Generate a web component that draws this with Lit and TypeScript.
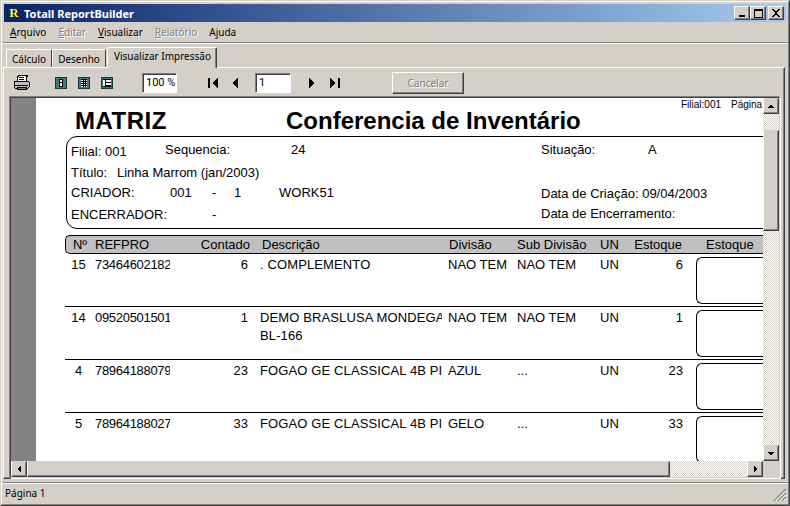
import { LitElement, html, css, svg } from "lit";
import { customElement } from "lit/decorators.js";

const rows = [
  { n: "15", ref: "73464602182", qty: "6", desc: [". COMPLEMENTO"], div: "NAO TEM", sub: "NAO TEM", un: "UN", est: "6" },
  { n: "14", ref: "09520501501", qty: "1", desc: ["DEMO BRASLUSA MONDEGA", "BL-166"], div: "NAO TEM", sub: "NAO TEM", un: "UN", est: "1" },
  { n: "4", ref: "78964188079", qty: "23", desc: ["FOGAO GE CLASSICAL 4B PI"], div: "AZUL", sub: "...", un: "UN", est: "23" },
  { n: "5", ref: "78964188027", qty: "33", desc: ["FOGAO GE CLASSICAL 4B PI"], div: "GELO", sub: "...", un: "UN", est: "33" },
];

const arrow = (d: string, w = 12, h = 12) =>
  html`<svg width=${w} height=${h} viewBox="0 0 ${w} ${h}" fill="#000" shape-rendering="crispEdges"><path d=${d}></path></svg>`;

const pageIcon = (inner: unknown) => html`<svg class="pg" width="12" height="12" viewBox="0 0 12 12" shape-rendering="crispEdges">
  <rect width="12" height="12" fill="#46777a"></rect>
  <path d="M0 0h12v1H0zM0 11h12v1H0zM0 0h1v12H0zM11 0h1v12h-1z" fill="#123a3a"></path>
  ${inner}
</svg>`;

@customElement("app-root")
export class AppRoot extends LitElement {
  static styles = css`
    :host { display: block; width: 790px; height: 506px; overflow: hidden; background: #d4d0c8; font-family: "Noto Sans", "Liberation Sans", sans-serif; font-size: 10px; color: #000; }
    * { box-sizing: border-box; }
    .outer { height: 506px; border: 1px solid; border-color: #d4d0c8 #404040 #404040 #d4d0c8; }
    .win { height: 100%; border: 1px solid; border-color: #fff #808080 #808080 #fff; padding: 2px; display: flex; flex-direction: column; }
    .title { height: 18px; flex: none; display: flex; align-items: center; padding: 0 2px 0 4px; background: linear-gradient(90deg, #0a246a, #a6caf0); color: #fff; font-weight: 700; gap: 4px; }
    .title .name { flex: 1; font-size: 11px; white-space: nowrap; }
    .logo { width: 12px; height: 12px; color: #ffff30; font: 700 13px/12px "Liberation Serif", serif; text-shadow: 1px 0 0 #000; text-align: center; }
    .wbtns { display: flex; }
    .wbtn { width: 16px; height: 14px; background: #d4d0c8; display: flex; align-items: center; justify-content: center; border: 1px solid; border-color: #fff #404040 #404040 #fff; box-shadow: inset -1px -1px 0 #808080; }
    .wbtn.close { margin-left: 2px; }
    .menu { height: 20px; flex: none; display: flex; align-items: center; gap: 12px; padding-left: 6px; white-space: nowrap; }
    .menu u { text-decoration: underline; }
    .off { color: #808080; text-shadow: 1px 1px 0 #fff; }
    .sep { height: 2px; flex: none; background: #808080; border-bottom: 1px solid #fff; margin: 0 -1px; }
    .tabs { height: 23px; flex: none; display: flex; align-items: flex-end; padding-left: 2px; position: relative; z-index: 1; }
    .tab { height: 18px; padding: 0 5px; display: flex; align-items: center; border: 1px solid; border-color: #fff #404040 transparent #fff; border-bottom: 0; border-radius: 2px 2px 0 0; white-space: nowrap; }
    .tab.active { height: 21px; margin: 0 0 -1px 1px; background: #d4d0c8; padding: 0 5px 4px 6px; box-shadow: inset -1px 0 0 #808080; }
    .panel { flex: 1; min-height: 0; margin: 0 1px 0 -1px; border: 1px solid; border-color: #fff #404040 #404040 #fff; box-shadow: inset -1px -1px 0 #808080; display: flex; flex-direction: column; }
    .toolbar { height: 29px; flex: none; display: flex; align-items: center; }
    .printer { margin-left: 9px; margin-right: 25px; }
    .pg { margin-right: 11px; }
    .field { height: 20px; background: #fff; border: 1px solid; border-color: #808080 #fff #fff #808080; box-shadow: inset 1px 1px 0 #404040; display: flex; align-items: center; padding-left: 3px; white-space: nowrap; font-size: 11px; font-family: Roboto, sans-serif; }
    .zoom { width: 35px; margin-left: 18px; margin-right: 31px; }
    .page-no { width: 36px; margin: 0 18px 0 17px; }
    .nav { display: block; line-height: 0; }
    .nav-first { margin-right: 12px; }
    .nav-next { margin-right: 15px; }
    .cancel { width: 72px; height: 22px; margin-left: 52px; display: flex; align-items: center; justify-content: center; background: #d4d0c8; border: 1px solid; border-color: #fff #404040 #404040 #fff; box-shadow: inset -1px -1px 0 #808080; }
    .viewer { width: 770px; height: 381px; margin-left: 6px; display: grid; grid-template-columns: 752px 16px; grid-template-rows: 363px 16px; border: 1px solid; border-color: #404040 #d4d0c8 #d4d0c8 #404040; box-shadow: -1px -1px 0 #808080, 1px 1px 0 #fff; font-family: "Liberation Sans", Arial, sans-serif; font-size: 13px; }
    .stage { overflow: hidden; display: flex; background: #848284; padding-left: 25px; }
    .sheet { width: 900px; flex: none; background: #fff; padding-left: 29px; white-space: nowrap; line-height: 18px; }
    .head { height: 38px; display: grid; grid-template-columns: 221px 395px auto; font-weight: 700; font-size: 24px; line-height: 28px; align-items: end; padding-bottom: 1px; }
    .head .matriz { padding-left: 10px; letter-spacing: 0.5px; }
    .head .small { align-self: start; font-weight: 400; font-size: 10px; line-height: 14px; }
    .small b { font-weight: 400; margin-left: 10px; }
    .info { height: 93px; margin-left: 1px; border: 1px solid #000; border-radius: 11px 0 0 11px; padding: 4px 0 0 4px; display: grid; grid-template-columns: 46px 48px 5px 42px 22px 45px 12px 250px 107px 1fr; grid-template-rows: 23px 20px 22px 22px; }
    .i-filial { grid-column: 1 / 3; padding-top: 2px; }
    .i-seq { grid-column: 3 / 7; }
    .i-val { grid-column: 8; }
    .i-sit { grid-column: 9; }
    .i-a { grid-column: 10; }
    .i-tit { grid-column: 1; }
    .i-lin { grid-column: 2 / 8; }
    .i-lab { grid-column: 1 / 4; }
    .i-c1 { grid-column: 4; }
    .i-c2 { grid-column: 5; }
    .i-c3 { grid-column: 6; }
    .i-c4 { grid-column: 7 / 9; }
    .i-dc { grid-column: 9 / 11; padding-top: 1px; }
    .i-de { grid-column: 9 / 11; margin-top: -1px; }
    .table-head, .row { display: grid; }
    .table-head { grid-template-columns: 29px 75px 80px 199px 68px 83px 30px 52px 100px; height: 19px; margin-top: 6px; background: #c0bfc2; border: solid #000; border-width: 1px 0 1px 1px; border-radius: 5px 0 0 5px; line-height: 18px; align-items: center; }
    .row { grid-template-columns: 30px 75px 78px 200px 69px 83px 30px 53px 100px; height: 53px; border-bottom: 1px solid #000; }
    .row > span { padding-top: 2px; overflow: hidden; }
    .c-n { padding: 0 9px 0 6px; text-align: center; }
    .table-head .c-n { padding: 0 7px 0 6px; }
    .c-ref { letter-spacing: -0.3px; }
    .c-num { text-align: right; }
    .row > .c-desc { margin: 0 6px 0 12px; letter-spacing: 0.12px; }
    .head-desc { margin-left: 12px; }
    .head-box { padding-left: 24px; }
    .box { margin: 3px 0 2px 13px; border: 1px solid #000; border-radius: 6px 0 0 6px; border-right: 0; }
    .vbar { display: flex; flex-direction: column; }
    .hbar { display: flex; }
    .track { flex: 1; background: repeating-conic-gradient(#d4d0c8 0 25%, #fff 0 50%) 0 0 / 2px 2px; }
    .vbar .track { padding-top: 16px; }
    .vbar .thumb { height: 101px; }
    .hbar .thumb { width: 643px; }
    .thumb, .sb { background: #d4d0c8; border: 1px solid; border-color: #d4d0c8 #404040 #404040 #fff; box-shadow: inset -1px -1px 0 #808080; }
    .sb { width: 16px; height: 16px; flex: none; display: flex; align-items: center; justify-content: center; }
    .corner { background: #d4d0c8; }
    .status { height: 20px; margin: 3px -1px 0 -1px; flex: none; border-top: 1px solid #808080; box-shadow: inset 0 1px 0 #fff; display: flex; align-items: center; justify-content: space-between; padding: 1px 0 0 2px; }
    .status svg { align-self: flex-end; }
  `;

  render() {
    return html`<div class="outer"><div class="win">
      <div class="title">
        <div class="logo">R</div>
        <div class="name">Totall ReportBuilder</div>
        <div class="wbtns">
          <div class="wbtn">${arrow("M1 6h6v2H1z", 9, 9)}</div>
          <div class="wbtn">${arrow("M0 0h9v2H0zM0 0h1v9H0zM8 0h1v9H8zM0 8h9v1H0z", 9, 9)}</div>
          <div class="wbtn close">${arrow("M0 0h2l1.5 2h1L6 0h2L5 4l3 4H6L4.5 6h-1L2 8H0l3-4z", 9, 9)}</div>
        </div>
      </div>
      <div class="menu">
        <span><u>A</u>rquivo</span>
        <span class="off"><u>E</u>ditar</span>
        <span><u>V</u>isualizar</span>
        <span class="off"><u>R</u>elatório</span>
        <span>A<u>j</u>uda</span>
      </div>
      <div class="sep"></div>
      <div class="tabs">
        <div class="tab">Cálculo</div>
        <div class="tab">Desenho</div>
        <div class="tab active">Visualizar Impressão</div>
      </div>
      <div class="panel">
        <div class="toolbar">
          <svg class="printer" width="17" height="17" viewBox="0 0 17 17" shape-rendering="crispEdges">
            <path d="M5 1h9v1h-1v5H4V2h1z" fill="#fff" stroke="#000" stroke-width="1"></path>
            <path d="M6 3h5M6 5h5" stroke="#000"></path>
            <path d="M2 7h13l1 1v5l-1 1H2l-1-1V8z" fill="#c0c0c0" stroke="#000"></path>
            <path d="M2 11h13" stroke="#000"></path>
            <path d="M4 13h9v2H4z" fill="#808080" stroke="#000"></path>
          </svg>
          ${pageIcon(svg`<path d="M4 2h4v8H4z" fill="#000"></path><path d="M5 3h2v2H5zM5 6h2v3H5z" fill="#fff"></path>`)}
          ${pageIcon(svg`<path d="M3 2h6v8H3z" fill="#fff"></path><path d="M3 2h6v1H3zM3 4h6v1H3zM3 6h6v1H3zM3 8h6v1H3zM5 2h1v8H5zM7 2h1v8H7z" fill="#000"></path>`)}
          ${pageIcon(svg`<path d="M2 2h8v8H2z" fill="#fff"></path><path d="M2 2h8v1H2zM5 5h5v1H5zM5 8h5v1H5zM4 3h1v7H4zM2 9h8v1H2z" fill="#000"></path>`)}
          <div class="field zoom">100 %</div>
          <span class="nav nav-first">${arrow("M0 1h2v10H0zM10 1v10L4 6z")}</span>
          <span class="nav">${arrow("M6 1v10L0 6z", 6, 12)}</span>
          <div class="field page-no">1</div>
          <span class="nav nav-next">${arrow("M0 1v10l6-5z", 6, 12)}</span>
          <span class="nav">${arrow("M0 1v10l6-5zM8 1h2v10H8z", 10, 12)}</span>
          <div class="cancel off">Cancelar</div>
        </div>
        <div class="viewer">
          <div class="stage">
            <div class="sheet">
              <div class="head">
                <span class="matriz">MATRIZ</span>
                <span>Conferencia de Inventário</span>
                <span class="small">Filial:001<b>Página 1</b></span>
              </div>
              <div class="info">
                <span class="i-filial">Filial: 001</span><span class="i-seq">Sequencia:</span><span class="i-val">24</span><span class="i-sit">Situação:</span><span class="i-a">A</span>
                <span class="i-tit">Título:</span><span class="i-lin">Linha Marrom (jan/2003)</span>
                <span class="i-lab">CRIADOR:</span><span class="i-c1">001</span><span class="i-c2">-</span><span class="i-c3">1</span><span class="i-c4">WORK51</span><span class="i-dc">Data de Criação: 09/04/2003</span>
                <span class="i-lab">ENCERRADOR:</span><span class="i-c2">-</span><span class="i-de">Data de Encerramento:</span>
              </div>
              <div class="table-head">
                <span class="c-n">Nº</span><span>REFPRO</span><span class="c-num">Contado</span><span class="head-desc">Descrição</span><span>Divisão</span><span>Sub Divisão</span><span>UN</span><span class="c-num">Estoque</span><span class="head-box">Estoque</span>
              </div>
              ${rows.map(
                (r) => html`<div class="row">
                  <span class="c-n">${r.n}</span><span class="c-ref">${r.ref}</span><span class="c-num">${r.qty}</span>
                  <span class="c-desc">${r.desc.map((l) => html`${l}<br />`)}</span>
                  <span>${r.div}</span><span>${r.sub}</span><span>${r.un}</span><span class="c-num">${r.est}</span>
                  <div class="box"></div>
                </div>`
              )}
            </div>
          </div>
          <div class="vbar">
            <div class="sb">${arrow("M4 2h1v1h1v1h1v1H1V4h1V3h1V2h1z", 8, 7)}</div>
            <div class="track"><div class="thumb"></div></div>
            <div class="sb">${arrow("M1 2h6v1H6v1H5v1H3V4H2V3H1z", 8, 7)}</div>
          </div>
          <div class="hbar">
            <div class="sb">${arrow("M4 1h1v6H4V6H3V5H2V3h1V2h1z", 7, 8)}</div>
            <div class="thumb"></div>
            <div class="track"></div>
            <div class="sb">${arrow("M2 1h1v1h1v1h1v2H4v1H3v1H2z", 7, 8)}</div>
          </div>
          <div class="corner"></div>
        </div>
      </div>
      <div class="status">
        <span>Página 1</span>
        <svg width="14" height="14" viewBox="0 0 14 14"><path d="M13 1L1 13M13 5L5 13M13 9L9 13" stroke="#808080" stroke-width="1.2"></path><path d="M13 2.5L2.5 13M13 6.5L6.5 13M13 10.5L10.5 13" stroke="#fff"></path></svg>
      </div>
    </div></div>`;
  }
}
